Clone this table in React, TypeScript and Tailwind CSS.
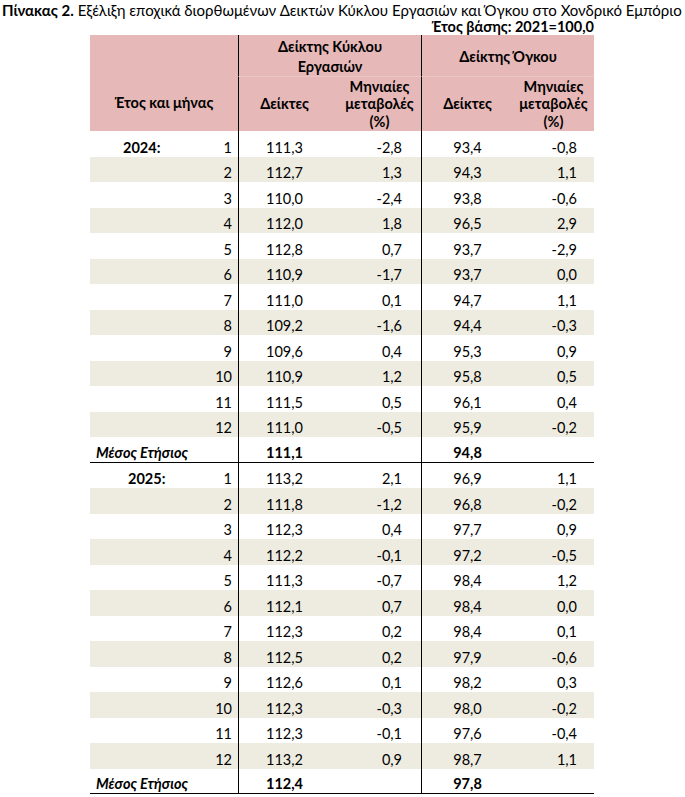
import React from "react"

type Row = { m: number; a: string; b: string; c: string; d: string }

const y2024: Row[] = [
  { m: 1, a: "111,3", b: "-2,8", c: "93,4", d: "-0,8" },
  { m: 2, a: "112,7", b: "1,3", c: "94,3", d: "1,1" },
  { m: 3, a: "110,0", b: "-2,4", c: "93,8", d: "-0,6" },
  { m: 4, a: "112,0", b: "1,8", c: "96,5", d: "2,9" },
  { m: 5, a: "112,8", b: "0,7", c: "93,7", d: "-2,9" },
  { m: 6, a: "110,9", b: "-1,7", c: "93,7", d: "0,0" },
  { m: 7, a: "111,0", b: "0,1", c: "94,7", d: "1,1" },
  { m: 8, a: "109,2", b: "-1,6", c: "94,4", d: "-0,3" },
  { m: 9, a: "109,6", b: "0,4", c: "95,3", d: "0,9" },
  { m: 10, a: "110,9", b: "1,2", c: "95,8", d: "0,5" },
  { m: 11, a: "111,5", b: "0,5", c: "96,1", d: "0,4" },
  { m: 12, a: "111,0", b: "-0,5", c: "95,9", d: "-0,2" },
]

const y2025: Row[] = [
  { m: 1, a: "113,2", b: "2,1", c: "96,9", d: "1,1" },
  { m: 2, a: "111,8", b: "-1,2", c: "96,8", d: "-0,2" },
  { m: 3, a: "112,3", b: "0,4", c: "97,7", d: "0,9" },
  { m: 4, a: "112,2", b: "-0,1", c: "97,2", d: "-0,5" },
  { m: 5, a: "111,3", b: "-0,7", c: "98,4", d: "1,2" },
  { m: 6, a: "112,1", b: "0,7", c: "98,4", d: "0,0" },
  { m: 7, a: "112,3", b: "0,2", c: "98,4", d: "0,1" },
  { m: 8, a: "112,5", b: "0,2", c: "97,9", d: "-0,6" },
  { m: 9, a: "112,6", b: "0,1", c: "98,2", d: "0,3" },
  { m: 10, a: "112,3", b: "-0,3", c: "98,0", d: "-0,2" },
  { m: 11, a: "112,3", b: "-0,1", c: "97,6", d: "-0,4" },
  { m: 12, a: "113,2", b: "0,9", c: "98,7", d: "1,1" },
]

const cols = "grid grid-cols-[148px_92px_91px_92px_81px]"

function DataRow({ r, year, yearPad }: { r: Row; year?: string; yearPad?: string }) {
  const striped = r.m % 2 === 0
  return (
    <div className={`${cols} h-[25.5px] leading-[18px] ${striped ? "bg-[#eeece1]" : ""}`}>
      <div className="flex items-end justify-between pr-[6px]">
        <span className={`font-bold ${yearPad}`}>{year}</span>
        <span>{r.m}</span>
      </div>
      <div className="flex items-end justify-center border-l border-black">{r.a}</div>
      <div className="flex items-end justify-end pr-[19px]">{r.b}</div>
      <div className="flex items-end justify-center border-l border-black">{r.c}</div>
      <div className="flex items-end justify-end pr-[17px]">{r.d}</div>
    </div>
  )
}

function MeanRow({ a, c }: { a: string; c: string }) {
  return (
    <div className={`${cols} h-[25.5px] leading-[18px] border-b border-black`}>
      <div className="flex items-end pl-[6px] font-bold italic">Μέσος Ετήσιος</div>
      <div className="flex items-end justify-center border-l border-black font-bold">{a}</div>
      <div />
      <div className="flex items-end justify-center border-l border-black font-bold">{c}</div>
      <div />
    </div>
  )
}

export default function App() {
  return (
    <div
      className="w-[685px] h-[797px] bg-white text-black text-[14.5px]"
      style={{ fontFamily: "Lato, 'Open Sans', sans-serif" }}
    >
      {/* Title */}
      <div className="pl-[2px] pt-[1px] leading-[18px] whitespace-nowrap text-[15px]">
        <span className="font-bold">Πίνακας 2.</span> Εξέλιξη εποχικά διορθωμένων Δεικτών Κύκλου
        Εργασιών και Όγκου στο Χονδρικό Εμπόριο
      </div>
      <div className="w-[594px] text-right font-bold leading-[16px]">Έτος βάσης: 2021=100,0</div>

      {/* Table */}
      <div className="ml-[90px] mt-[0px] w-[504px]">
        {/* Header */}
        <div className="grid grid-cols-[148px_92px_91px_92px_81px] grid-rows-[42px_54px] bg-[#e6b8b7] font-bold">
          <div className="row-span-2 flex items-end justify-center pb-[17px]">Έτος και μήνας</div>
          <div className="col-span-2 flex items-center justify-center border-l border-black border-b border-b-[#ecc6c5] pt-[2px] text-center leading-[20px]">
            Δείκτης Κύκλου
            <br />
            Εργασιών
          </div>
          <div className="col-span-2 flex items-center justify-center border-l border-black border-b border-b-[#ecc6c5] pt-[2px]">
            Δείκτης Όγκου
          </div>
          <div className="flex items-center justify-center border-l border-black">Δείκτες</div>
          <div className="flex items-center justify-center pl-[8px] text-center leading-[17.5px]">
            Μηνιαίες
            <br />
            μεταβολές
            <br />
            (%)
          </div>
          <div className="flex items-center justify-center border-l border-black">Δείκτες</div>
          <div className="flex items-center justify-center text-center leading-[17.5px]">
            Μηνιαίες
            <br />
            μεταβολές
            <br />
            (%)
          </div>
        </div>

        {/* 2024 */}
        {y2024.map((r) => (
          <DataRow key={`a${r.m}`} r={r} year={r.m === 1 ? "2024:" : undefined} yearPad="pl-[33px]" />
        ))}
        <MeanRow a="111,1" c="94,8" />

        {/* 2025 */}
        {y2025.map((r) => (
          <DataRow key={`b${r.m}`} r={r} year={r.m === 1 ? "2025:" : undefined} yearPad="pl-[38px]" />
        ))}
        <MeanRow a="112,4" c="97,8" />
      </div>
    </div>
  )
}
